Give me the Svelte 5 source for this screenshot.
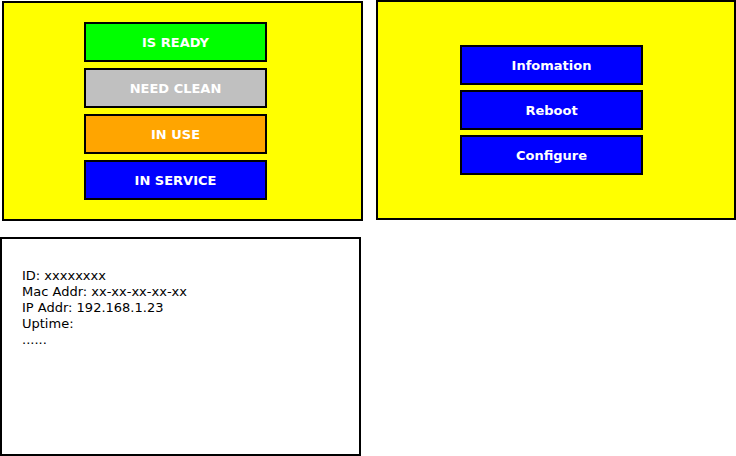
<script>
  const statuses = [
    { label: 'IS READY', tone: 'ready' },
    { label: 'NEED CLEAN', tone: 'clean' },
    { label: 'IN USE', tone: 'use' },
    { label: 'IN SERVICE', tone: 'service' }
  ];
  const actions = ['Infomation', 'Reboot', 'Configure'];
  const info = ['ID: xxxxxxxx', 'Mac Addr: xx-xx-xx-xx-xx', 'IP Addr: 192.168.1.23', 'Uptime:', '......'];
</script>

<main>
  <section class="panel status">
    {#each statuses as s}
      <button class={s.tone}>{s.label}</button>
    {/each}
  </section>
  <section class="panel menu">
    {#each actions as a}
      <button class="service">{a}</button>
    {/each}
  </section>
  <section class="panel info">
    {#each info as line}
      <p>{line}</p>
    {/each}
  </section>
</main>

<style>
  :global(body) {
    margin: 0;
    background: #fff;
  }
  main {
    display: grid;
    grid-template-columns: 1fr 1fr;
    align-items: start;
    gap: 16px;
    font-family: Verdana, "DejaVu Sans", sans-serif;
    font-size: 13px;
  }
  .panel {
    box-sizing: border-box;
    min-height: 219px;
    border: 2px solid #000;
    display: flex;
    flex-direction: column;
    align-items: center;
  }
  .status {
    min-height: 220px;
    margin: 1px -3px 0 2px;
    padding: 19px 14px 19px 0;
    gap: 6px;
    background: #ff0;
  }
  .menu {
    min-height: 220px;
    padding: 43px 9px 43px 0;
    gap: 5px;
    background: #ff0;
  }
  button {
    box-sizing: border-box;
    width: 183px;
    height: 40px;
    padding: 0;
    border: 2px solid #000;
    border-radius: 0;
    color: #fff;
    font: bold 13px Verdana, "DejaVu Sans", sans-serif;
  }
  .ready { background: #0f0; }
  .clean { background: #c0c0c0; }
  .use { background: #ffa500; }
  .service { background: #00f; }
  .info {
    align-items: flex-start;
    margin-right: -1px;
    padding: 29px 20px;
    background: #fff;
  }
  p {
    margin: 0;
    line-height: 16px;
  }
</style>
